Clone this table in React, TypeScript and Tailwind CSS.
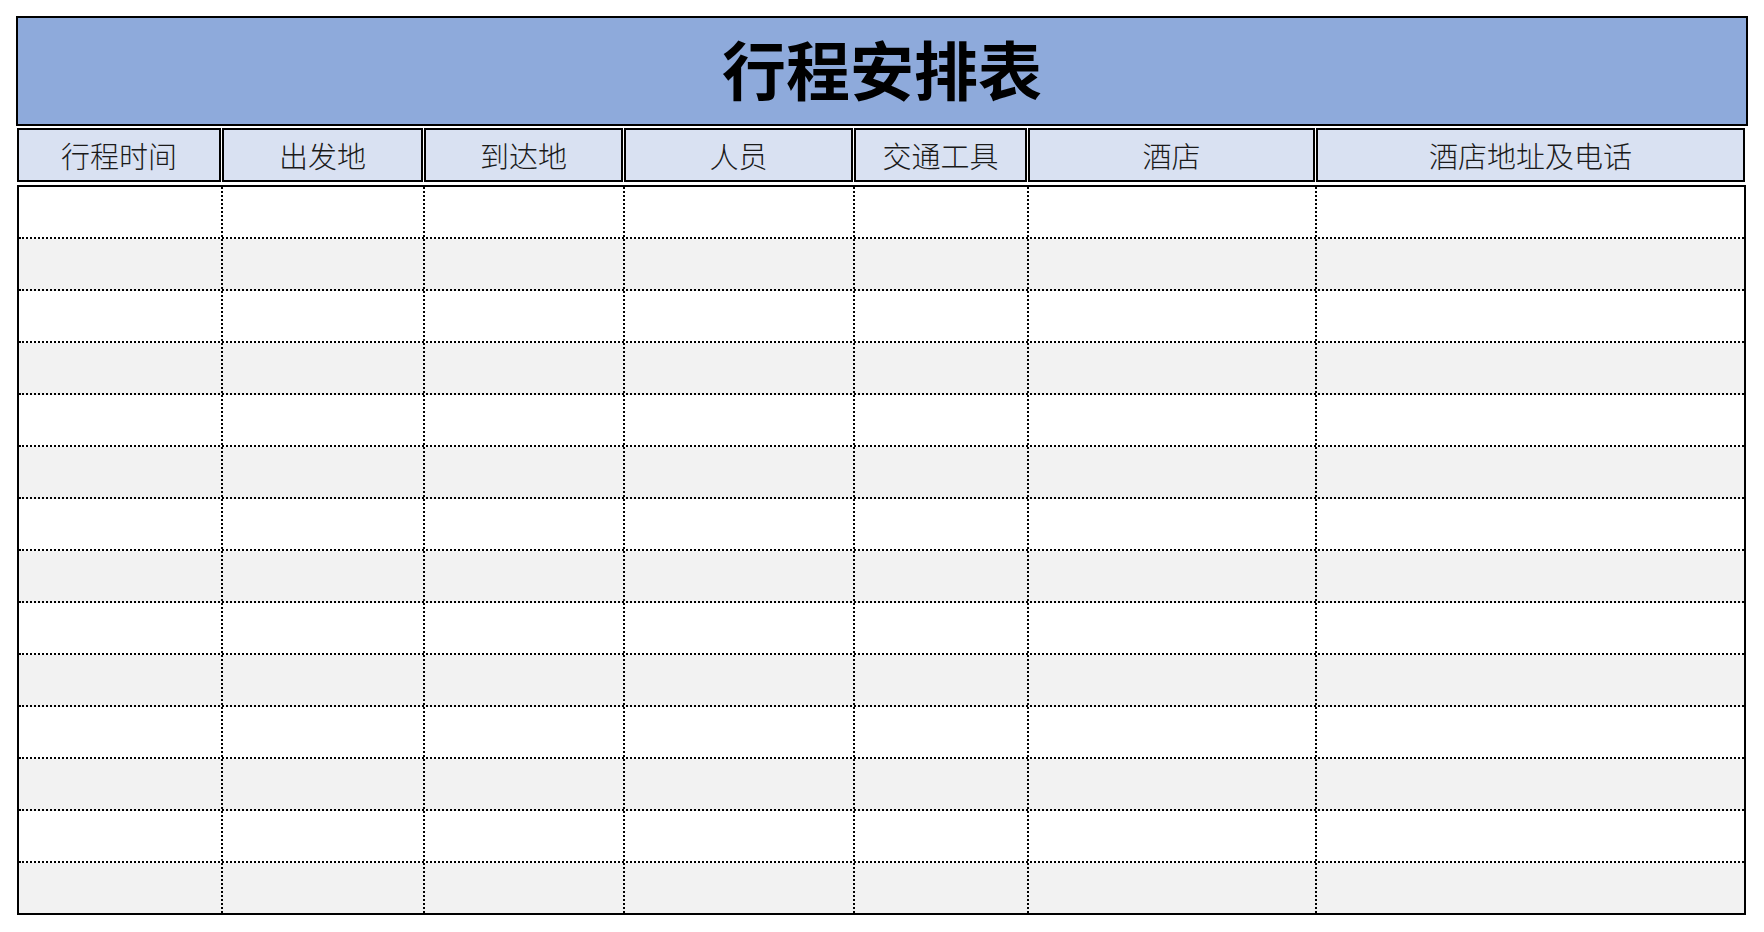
import { FC } from "react";

const headers = [
  { label: "行程时间", w: "w-[204px]" },
  { label: "出发地", w: "w-[201px]" },
  { label: "到达地", w: "w-[199px]" },
  { label: "人员", w: "w-[229px]" },
  { label: "交通工具", w: "w-[173px]" },
  { label: "酒店", w: "w-[287px]" },
  { label: "酒店地址及电话", w: "w-[429px]" },
];

// body column widths, each including its dotted right line
const cols = [
  "w-[204px]",
  "w-[202px]",
  "w-[200px]",
  "w-[230px]",
  "w-[174px]",
  "w-[288px]",
  "w-[427px]",
];

const ROWS = 14;

const font = "font-['Noto_Sans_CJK_SC','Noto_Sans',sans-serif]";

const App: FC = () => {
  return (
    <div className={`min-h-screen w-full bg-white pt-[16px] pl-[16px] ${font}`}>
      <div className="flex h-[110px] w-[1732px] items-center justify-center border-2 border-black bg-[#8eaadb] pb-[8px]">
        <h1 className="text-[64px] font-bold leading-none text-black">行程安排表</h1>
      </div>

      <div className="mt-[2px] ml-[1px] flex gap-[1px]">
        {headers.map(h => (
          <div
            key={h.label}
            className={`${h.w} flex h-[54px] items-center justify-center border-2 border-black bg-[#d9e1f2] text-[29px] font-light leading-none text-[#1a1a1a]`}
          >
            {h.label}
          </div>
        ))}
      </div>

      <div className="mt-[3px] ml-[1px] w-[1729px] border-2 border-black">
        {Array.from({ length: ROWS }).map((_, r) => {
          const last = r === ROWS - 1;
          return (
            <div
              key={r}
              className={`flex ${last ? "h-[50px]" : "h-[52px] border-b-2 border-dotted border-black"} ${
                r % 2 === 0 ? "bg-white" : "bg-[#f2f2f2]"
              }`}
            >
              {cols.map((w, c) => (
                <div
                  key={c}
                  className={`${w} h-full ${c < cols.length - 1 ? "border-r-2 border-dotted border-black" : ""}`}
                />
              ))}
            </div>
          );
        })}
      </div>
    </div>
  );
};

export default App;
